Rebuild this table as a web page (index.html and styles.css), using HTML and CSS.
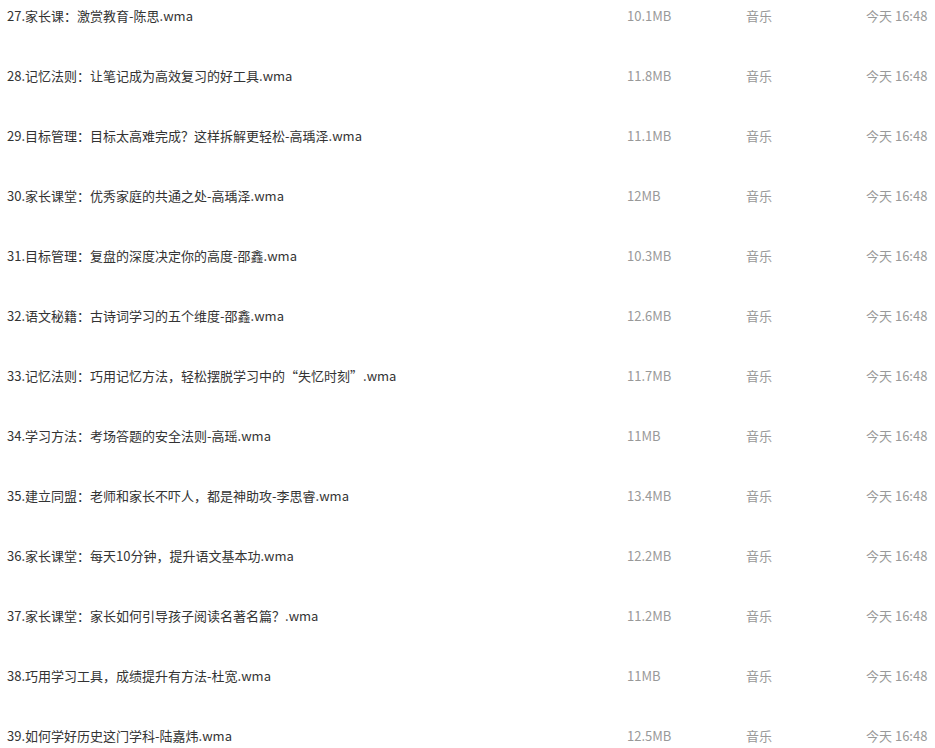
FILE: index.html
```html
<!DOCTYPE html>
<html>
<head>
  <meta charset="UTF-8">
  <title>文件列表</title>
  <link rel="stylesheet" href="styles.css">
</head>
<body>

<div class="file-list">
  <div class="file-row"><span class="name">27.家长课：激赏教育-陈思.wma</span><span class="size">10.1MB</span><span class="type">音乐</span><span class="time">今天 16:48</span></div>
  <div class="file-row"><span class="name">28.记忆法则：让笔记成为高效复习的好工具.wma</span><span class="size">11.8MB</span><span class="type">音乐</span><span class="time">今天 16:48</span></div>
  <div class="file-row"><span class="name">29.目标管理：目标太高难完成？这样拆解更轻松-高瑀泽.wma</span><span class="size">11.1MB</span><span class="type">音乐</span><span class="time">今天 16:48</span></div>
  <div class="file-row"><span class="name">30.家长课堂：优秀家庭的共通之处-高瑀泽.wma</span><span class="size">12MB</span><span class="type">音乐</span><span class="time">今天 16:48</span></div>
  <div class="file-row"><span class="name">31.目标管理：复盘的深度决定你的高度-邵鑫.wma</span><span class="size">10.3MB</span><span class="type">音乐</span><span class="time">今天 16:48</span></div>
  <div class="file-row"><span class="name">32.语文秘籍：古诗词学习的五个维度-邵鑫.wma</span><span class="size">12.6MB</span><span class="type">音乐</span><span class="time">今天 16:48</span></div>
  <div class="file-row"><span class="name">33.记忆法则：巧用记忆方法，轻松摆脱学习中的“失忆时刻”.wma</span><span class="size">11.7MB</span><span class="type">音乐</span><span class="time">今天 16:48</span></div>
  <div class="file-row"><span class="name">34.学习方法：考场答题的安全法则-高瑶.wma</span><span class="size">11MB</span><span class="type">音乐</span><span class="time">今天 16:48</span></div>
  <div class="file-row"><span class="name">35.建立同盟：老师和家长不吓人，都是神助攻-李思睿.wma</span><span class="size">13.4MB</span><span class="type">音乐</span><span class="time">今天 16:48</span></div>
  <div class="file-row"><span class="name">36.家长课堂：每天10分钟，提升语文基本功.wma</span><span class="size">12.2MB</span><span class="type">音乐</span><span class="time">今天 16:48</span></div>
  <div class="file-row"><span class="name">37.家长课堂：家长如何引导孩子阅读名著名篇？.wma</span><span class="size">11.2MB</span><span class="type">音乐</span><span class="time">今天 16:48</span></div>
  <div class="file-row"><span class="name">38.巧用学习工具，成绩提升有方法-杜宽.wma</span><span class="size">11MB</span><span class="type">音乐</span><span class="time">今天 16:48</span></div>
  <div class="file-row"><span class="name">39.如何学好历史这门学科-陆嘉炜.wma</span><span class="size">12.5MB</span><span class="type">音乐</span><span class="time">今天 16:48</span></div>
</div>

</body>
</html>
```

FILE: styles.css
```css
/* --- BASE --- */
* {
  margin: 0;
  padding: 0;
  box-sizing: border-box;
}
html, body {
  background: #fff;
  font-family: "Noto Sans CJK SC", "Noto Sans", sans-serif;
  font-size: 13px;
  overflow: hidden;
}

/* --- LISTE DES FICHIERS --- */
.file-list {
  display: flex;
  flex-direction: column;
  padding-top: 1px;
}

.file-row {
  display: grid;
  grid-template-columns: 620px 119px 120px 1fr;
  height: 60px;
  line-height: 30px;
  padding-left: 7px;
  padding-right: 8px;
  white-space: nowrap;
}

.name {
  color: #333;
}

.size,
.type,
.time {
  color: #999;
}

.time {
  text-align: right;
}
```
